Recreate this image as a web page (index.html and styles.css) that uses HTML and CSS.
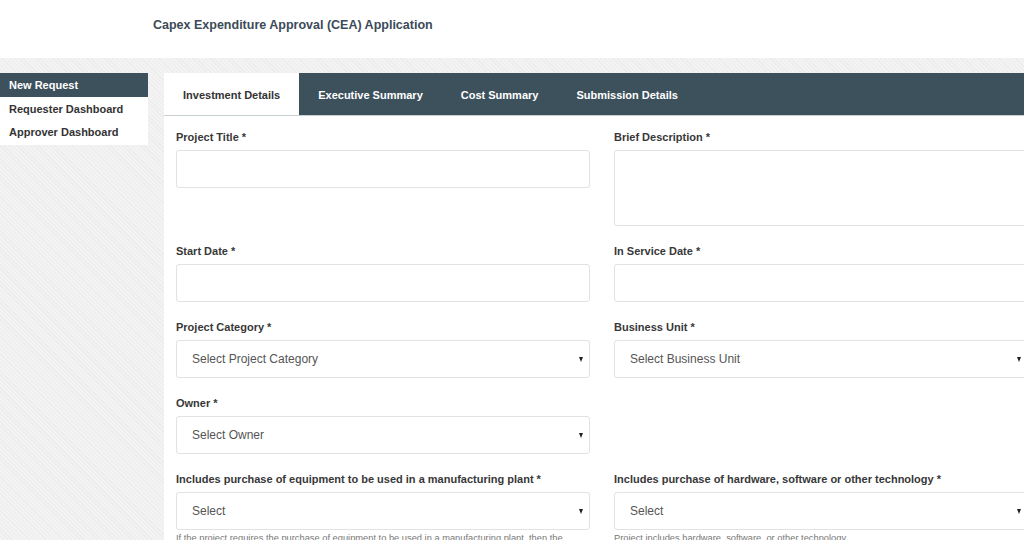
FILE: index.html
```html
<!DOCTYPE html>
<html lang="en">
<head>
<meta charset="utf-8">
<title>Capex Expenditure Approval (CEA) Application</title>
<link rel="stylesheet" href="styles.css">
</head>
<body>
<header class="header">
  <h1 class="app-title">Capex Expenditure Approval (CEA) Application</h1>
</header>
<div class="page">
  <nav class="sidebar">
    <div class="side-item active">New Request</div>
    <div class="side-item first">Requester Dashboard</div>
    <div class="side-item">Approver Dashboard</div>
  </nav>
  <main class="panel">
    <div class="tabs">
      <div class="tab active">Investment Details</div>
      <div class="tab">Executive Summary</div>
      <div class="tab">Cost Summary</div>
      <div class="tab">Submission Details</div>
    </div>
    <div class="form">
      <div class="field">
        <label class="label">Project Title *</label>
        <div class="control"></div>
      </div>
      <div class="field">
        <label class="label">Brief Description *</label>
        <div class="control textarea"></div>
      </div>
      <div class="field">
        <label class="label">Start Date *</label>
        <div class="control"></div>
      </div>
      <div class="field">
        <label class="label">In Service Date *</label>
        <div class="control"></div>
      </div>
      <div class="field">
        <label class="label">Project Category *</label>
        <div class="control select"><span class="placeholder">Select Project Category</span><span class="caret"></span></div>
      </div>
      <div class="field">
        <label class="label">Business Unit *</label>
        <div class="control select"><span class="placeholder">Select Business Unit</span><span class="caret"></span></div>
      </div>
      <div class="field">
        <label class="label">Owner *</label>
        <div class="control select"><span class="placeholder">Select Owner</span><span class="caret"></span></div>
      </div>
      <div class="field empty"></div>
      <div class="field">
        <label class="label">Includes purchase of equipment to be used in a manufacturing plant *</label>
        <div class="control select"><span class="placeholder">Select</span><span class="caret"></span></div>
        <p class="help">If the project requires the purchase of equipment to be used in a manufacturing plant, then the</p>
      </div>
      <div class="field">
        <label class="label">Includes purchase of hardware, software or other technology *</label>
        <div class="control select"><span class="placeholder">Select</span><span class="caret"></span></div>
        <p class="help">Project includes hardware, software, or other technology.</p>
      </div>
    </div>
  </main>
</div>
</body>
</html>
```

FILE: styles.css
```css
html, body {
  margin: 0;
  padding: 0;
  height: 100%;
  overflow: hidden;
}
body {
  font-family: "Liberation Sans", Arial, sans-serif;
  color: #333;
  background: #fff;
}
.header {
  height: 58px;
  box-sizing: border-box;
  padding: 18px 0 0 153px;
  background: #fff;
}
.app-title {
  margin: 0;
  font-size: 12.5px;
  line-height: 15px;
  font-weight: bold;
  color: #3b4b58;
}
.page {
  display: flex;
  align-items: flex-start;
  gap: 16px;
  padding-top: 15px;
  min-height: 100%;
  background: repeating-linear-gradient(45deg, #ececec 0 1px, #f3f3f3 1px 3px);
}
.sidebar {
  width: 148px;
  flex: none;
  background: #fff;
  padding-bottom: 1px;
}
.side-item {
  height: 23px;
  line-height: 23px;
  padding-left: 9px;
  font-size: 11px;
  font-weight: bold;
  color: #333;
}
.side-item.first {
  margin-top: 1px;
}
.side-item.active {
  height: 24px;
  line-height: 24px;
  background: #3d515d;
  color: #fff;
}
.panel {
  flex: none;
  width: 880px;
  min-height: 480px;
  background: #fff;
}
.tabs {
  display: flex;
  height: 43px;
  background: #3d515d;
  border-bottom: 1px solid #c9d0d4;
  box-sizing: border-box;
}
.tab {
  padding: 0 19px;
  line-height: 44px;
  font-size: 11px;
  font-weight: bold;
  color: #fff;
}
.tab.active {
  background: #fff;
  color: #333;
}
.form {
  display: grid;
  grid-template-columns: 414px 414px;
  column-gap: 24px;
  row-gap: 18px;
  padding: 14px 12px;
}
.label {
  display: block;
  font-size: 11px;
  line-height: 14px;
  font-weight: bold;
  color: #383838;
  margin-bottom: 6px;
}
.control {
  height: 38px;
  box-sizing: border-box;
  border: 1px solid #e2e2e2;
  border-radius: 3px;
  background: #fff;
}
.control.textarea {
  height: 76px;
}
.control.select {
  display: flex;
  align-items: center;
  justify-content: space-between;
  padding: 0 6px 0 15px;
}
.placeholder {
  font-size: 12px;
  color: #555;
}
.caret {
  width: 0;
  height: 0;
  border-left: 2.5px solid transparent;
  border-right: 2.5px solid transparent;
  border-top: 5px solid #222;
}
.help {
  margin: 3px 0 0;
  font-size: 9.3px;
  line-height: 11px;
  color: #777;
}
```
